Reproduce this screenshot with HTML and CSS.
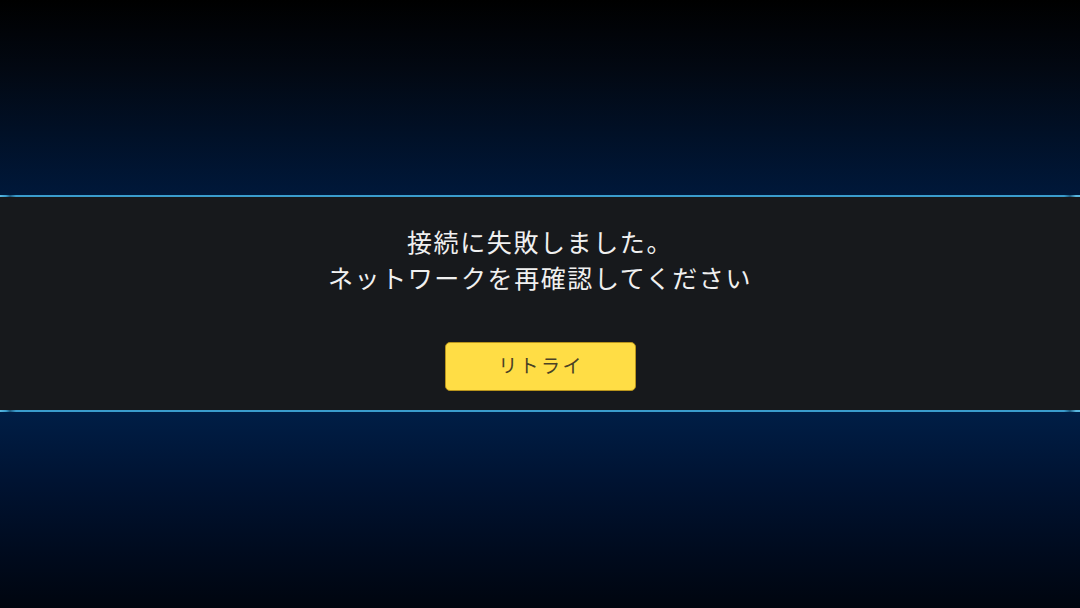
FILE: index.html
```html
<!DOCTYPE html>
<html lang="ja">
<head>
<meta charset="utf-8">
<link rel="stylesheet" href="styles.css">
</head>
<body>
<div class="screen">
  <div class="top"></div>
  <div class="line"></div>
  <div class="panel">
    <p class="msg">接続に失敗しました。<br>ネットワークを再確認してください</p>
    <button class="retry">リトライ</button>
  </div>
  <div class="line"></div>
  <div class="bottom"></div>
</div>
</body>
</html>
```

FILE: styles.css
```css
html, body {
  margin: 0;
  padding: 0;
  width: 1080px;
  height: 608px;
  overflow: hidden;
  background: #000;
  font-family: "Noto Sans CJK JP", "Noto Sans", sans-serif;
}
.screen {
  display: flex;
  flex-direction: column;
  width: 1080px;
  height: 608px;
}
.top {
  height: 195px;
  background: linear-gradient(to bottom, #000000 0%, #020812 35%, #00183a 100%);
}
.line {
  height: 2px;
  background: linear-gradient(to right, #5ab8e0 0px, #3a9ccc 6px, #1c5a80 10px, #3a9ccc 16px, #3a9ccc 1064px, #1c5a80 1070px, #5ab8e0 1076px);
}
.bottom {
  flex: 1;
  background: linear-gradient(to bottom, #001e46 0%, #001332 35%, #000a1c 75%, #00050f 100%);
}
.panel {
  height: 213px;
  background: #17191c;
  display: flex;
  flex-direction: column;
  align-items: center;
}
.msg {
  margin: 26px 0 0;
  color: #f0f0f0;
  font-size: 25px;
  line-height: 36px;
  letter-spacing: 1.6px;
  text-align: center;
}
.retry {
  margin-top: 47px;
  width: 191px;
  height: 49px;
  background: #ffdd45;
  border: 1px solid #b8941c;
  border-radius: 5px;
  color: #4a4125;
  font-family: "Noto Sans CJK JP", "Noto Sans", sans-serif;
  font-size: 19px;
  letter-spacing: 2.4px;
  padding: 0 0 4px 2px;
}
```
